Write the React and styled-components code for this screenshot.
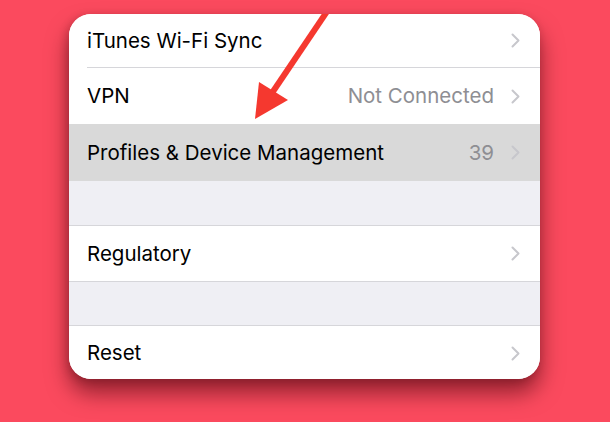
import React from 'react';
import styled, { createGlobalStyle } from 'styled-components';

const GlobalStyle = createGlobalStyle`
  html, body {
    margin: 0;
    padding: 0;
    background: #fb4a5e;
  }
  body {
    font-family: Inter, "Noto Sans", "Liberation Sans", sans-serif;
  }
`;

const Page = styled.div`
  width: 610px;
  height: 422px;
  padding: 14px 0 0 69px;
  box-sizing: border-box;
  position: relative;
  overflow: hidden;
`;

const Card = styled.div`
  width: 471px;
  height: 365px;
  border-radius: 22px;
  background: #ffffff;
  overflow: hidden;
  display: flex;
  flex-direction: column;
  box-shadow: 0 14px 22px rgba(60, 0, 10, 0.55), -2px 2px 8px rgba(60, 0, 10, 0.2);
`;

const Row = styled.div`
  height: ${p => p.h}px;
  flex: none;
  display: flex;
  align-items: center;
  padding: 0 20px 0 18px;
  background: ${p => (p.active ? '#d9d9d9' : '#ffffff')};
  box-sizing: border-box;
  border-top: ${p => (p.topLine ? '1px solid #d6d6da' : 'none')};
  border-bottom: ${p => (p.bottomLine ? '1px solid #d6d6da' : 'none')};
`;

const Inset = styled.div`
  height: 1px;
  flex: none;
  margin-left: 18px;
  background: #d6d6da;
`;

const Gap = styled.div`
  height: ${p => p.h}px;
  flex: none;
  background: #efeff4;
`;

const Label = styled.span`
  flex: 1;
  font-size: 20.5px;
  color: #000;
  margin-top: -1px;
`;

const Detail = styled.span`
  font-size: 20.5px;
  color: #8e8e93;
  margin-right: 17px;
  margin-top: -1px;
`;

const Chevron = () => (
  <svg width="9" height="15" viewBox="0 0 9 15">
    <path d="M1.5 1.5 L7.5 7.5 L1.5 13.5" fill="none" stroke="#c7c7cc" strokeWidth="2" strokeLinecap="round" strokeLinejoin="round" />
  </svg>
);

const Arrow = styled.svg`
  position: absolute;
  left: 0;
  top: 0;
  pointer-events: none;
`;

function Cell({ label, detail, h, active, topLine, bottomLine }) {
  return (
    <Row h={h} active={active} topLine={topLine} bottomLine={bottomLine}>
      <Label>{label}</Label>
      {detail && <Detail>{detail}</Detail>}
      <Chevron />
    </Row>
  );
}

export default function App() {
  return (
    <>
      <GlobalStyle />
      <Page>
        <Card>
          <Cell label="iTunes Wi-Fi Sync" h={53} />
          <Inset />
          <Cell label="VPN" detail="Not Connected" h={56} />
          <Cell label="Profiles & Device Management" detail="39" h={57} active />
          <Gap h={44} />
          <Cell label="Regulatory" h={57} topLine bottomLine />
          <Gap h={43} />
          <Cell label="Reset" h={55} topLine />
        </Card>
        <Arrow width="610" height="422" viewBox="0 0 610 422">
          <defs>
            <clipPath id="cardTop">
              <rect x="0" y="14" width="610" height="408" />
            </clipPath>
          </defs>
          <g clipPath="url(#cardTop)">
            <line x1="328" y1="10" x2="272" y2="93" stroke="#f5382f" strokeWidth="6" />
          </g>
          <polygon points="255,119 259,82 288,100" fill="#f5382f" />
        </Arrow>
      </Page>
    </>
  );
}
